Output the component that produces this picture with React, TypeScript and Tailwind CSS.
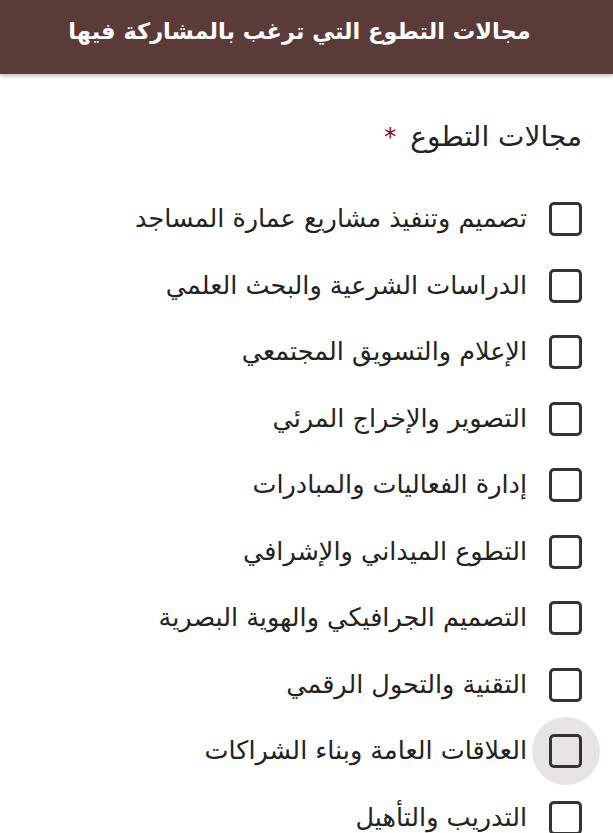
import React from "react";

const items = [
  "تصميم وتنفيذ مشاريع عمارة المساجد",
  "الدراسات الشرعية والبحث العلمي",
  "الإعلام والتسويق المجتمعي",
  "التصوير والإخراج المرئي",
  "إدارة الفعاليات والمبادرات",
  "التطوع الميداني والإشرافي",
  "التصميم الجرافيكي والهوية البصرية",
  "التقنية والتحول الرقمي",
  "العلاقات العامة وبناء الشراكات",
  "التدريب والتأهيل",
];

export default function App() {
  return (
    <div
      dir="rtl"
      className="w-[613px] h-[833px] overflow-hidden bg-white"
      style={{ fontFamily: '"DejaVu Sans", "Noto Sans", sans-serif' }}
    >
      <div className="h-[74px] bg-[#5b3b38] flex items-center justify-center pr-[14px] pb-[12px] shadow-[0_2px_4px_rgba(0,0,0,0.25)]">
        <h1 className="text-white font-bold text-[22.5px] leading-none">
          مجالات التطوع التي ترغب بالمشاركة فيها
        </h1>
      </div>
      <div className="pr-[31px] pt-[42px]">
        <div className="flex items-center gap-[14px] text-[28px] text-[#222] h-[42px]">
          <span>مجالات التطوع</span>
          <span className="text-[#8b0000] text-[24px]">*</span>
        </div>
        <div className="mt-[44px] flex flex-col gap-[32.5px]">
          {items.map((t, i) => (
            <label key={i} className="flex items-center gap-[22px] h-[34px]">
              <span className="relative w-[33px] h-[34px] shrink-0 flex items-center justify-center">
                {i === 8 && (
                  <span className="absolute w-[68px] h-[68px] rounded-full bg-[#e8e4e3] left-1/2 top-1/2 -translate-x-1/2 -translate-y-1/2" />
                )}
                <span className="relative w-[33px] h-[34px] border-[3.5px] border-[#333] rounded-[5px] bg-transparent" />
              </span>
              <span className="text-[25.5px] text-[#222] leading-none">{t}</span>
            </label>
          ))}
        </div>
      </div>
    </div>
  );
}
